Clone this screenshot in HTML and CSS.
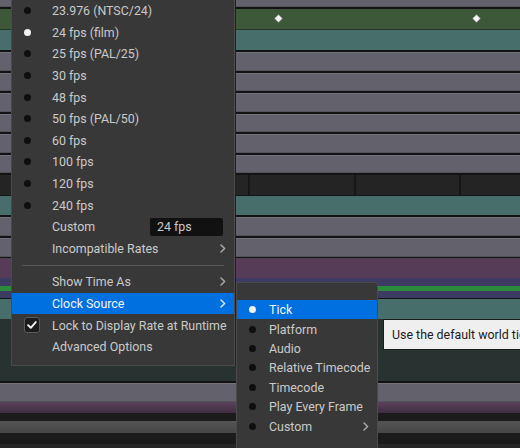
FILE: index.html
```html
<!DOCTYPE html>
<html>
<head>
<meta charset="utf-8">
<link rel="stylesheet" href="styles.css">
</head>
<body>
<div class="stage">
  <div class="timeline">
    <div class="row grey top"></div>
    <div class="row green keyrow">
      <span class="key key-a"></span>
      <span class="key key-b"></span>
    </div>
    <div class="row teal first-teal"></div>
    <div class="row grey track"></div>
    <div class="row grey track"></div>
    <div class="row grey track"></div>
    <div class="row grey track"></div>
    <div class="row grey track"></div>
    <div class="row grey track"></div>
    <div class="row dark sections">
      <div class="sec s1"></div>
      <div class="sec s2"></div>
      <div class="sec s3"></div>
      <div class="sec s4"></div>
    </div>
    <div class="row teal teal2"></div>
    <div class="row grey track2"></div>
    <div class="row grey track3"></div>
    <div class="row purple"></div>
    <div class="row bluepurple bp1"></div>
    <div class="row greenline"></div>
    <div class="row bluepurple bp2"></div>
    <div class="row teal teal3"></div>
    <div class="row darkgreen"></div>
    <div class="row grey track4"></div>
    <div class="row purplegrad"></div>
    <div class="row blackrow b1"></div>
    <div class="row greygrad"></div>
    <div class="row blackrow b2"></div>
    <div class="row bottomdark"></div>
  </div>

  <div class="menu main-menu">
    <div class="item"><span class="slot"><span class="dot"></span></span><span class="label">23.976 (NTSC/24)</span></div>
    <div class="item"><span class="slot"><span class="dot on"></span></span><span class="label">24 fps (film)</span></div>
    <div class="item"><span class="slot"><span class="dot"></span></span><span class="label">25 fps (PAL/25)</span></div>
    <div class="item"><span class="slot"><span class="dot"></span></span><span class="label">30 fps</span></div>
    <div class="item"><span class="slot"><span class="dot"></span></span><span class="label">48 fps</span></div>
    <div class="item"><span class="slot"><span class="dot"></span></span><span class="label">50 fps (PAL/50)</span></div>
    <div class="item"><span class="slot"><span class="dot"></span></span><span class="label">60 fps</span></div>
    <div class="item"><span class="slot"><span class="dot"></span></span><span class="label">100 fps</span></div>
    <div class="item"><span class="slot"><span class="dot"></span></span><span class="label">120 fps</span></div>
    <div class="item"><span class="slot"><span class="dot"></span></span><span class="label">240 fps</span></div>
    <div class="item"><span class="slot"></span><span class="label">Custom</span><span class="field">24 fps</span></div>
    <div class="item"><span class="slot"></span><span class="label">Incompatible Rates</span><svg class="chev" viewBox="0 0 6 9" width="6" height="9"><path d="M1 1 L4.6 4.5 L1 8"/></svg></div>
    <div class="sep"></div>
    <div class="item"><span class="slot"></span><span class="label">Show Time As</span><svg class="chev" viewBox="0 0 6 9" width="6" height="9"><path d="M1 1 L4.6 4.5 L1 8"/></svg></div>
    <div class="item active"><span class="slot"></span><span class="label">Clock Source</span><svg class="chev" viewBox="0 0 6 9" width="6" height="9"><path d="M1 1 L4.6 4.5 L1 8"/></svg></div>
    <div class="item"><span class="slot"><span class="check"><svg viewBox="0 0 16 16" width="14" height="14"><path d="M3.5 8.2 L6.6 11.2 L12.3 4.6"/></svg></span></span><span class="label">Lock to Display Rate at Runtime</span></div>
    <div class="item"><span class="slot"></span><span class="label">Advanced Options</span></div>
  </div>

  <div class="menu sub-menu">
    <div class="sitem active"><span class="dot on"></span><span class="label">Tick</span></div>
    <div class="sitem"><span class="dot"></span><span class="label">Platform</span></div>
    <div class="sitem"><span class="dot"></span><span class="label">Audio</span></div>
    <div class="sitem"><span class="dot"></span><span class="label">Relative Timecode</span></div>
    <div class="sitem"><span class="dot"></span><span class="label">Timecode</span></div>
    <div class="sitem"><span class="dot"></span><span class="label">Play Every Frame</span></div>
    <div class="sitem"><span class="dot"></span><span class="label">Custom</span><svg class="chev" viewBox="0 0 6 9" width="6" height="9"><path d="M1 1 L4.6 4.5 L1 8"/></svg></div>
  </div>

  <div class="tooltip">Use the default world tick</div>
</div>
</body>
</html>
```

FILE: styles.css
```css
html, body {
  margin: 0;
  padding: 0;
  background: #1b1b1b;
}
.stage {
  position: relative;
  width: 520px;
  height: 448px;
  overflow: hidden;
  font-family: Roboto, "Liberation Sans", sans-serif;
  font-size: 12.4px;
}

/* ---------- timeline background ---------- */
.timeline {
  display: flex;
  flex-direction: column;
  width: 520px;
}
.row {
  flex: none;
  position: relative;
  border-bottom: 0 solid #131313;
}
.grey {
  background: #63626c;
  box-shadow: inset 0 1px 0 #72717c, inset 0 -1px 0 #54535c;
}
.top { height: 7px; border-bottom-width: 2px; box-shadow: inset 0 -1px 0 #54535c; }
.green { background: #3c5839; height: 20px; border-bottom: 1px solid #263526; }
.teal { background: #476e6a; }
.first-teal { height: 20px; border-bottom-width: 2px; }
.track { height: 18.5px; border-bottom-width: 2px; }
.dark { background: #242424; height: 20px; border-bottom: 1px solid #151515; }
.sections { display: flex; }
.sec { height: 100%; }
.s1 { width: 248px; }
.s2 { width: 104px; border-left: 2px solid #161616; }
.s3 { width: 103px; border-left: 2px solid #161616; }
.s4 { flex: 1; border-left: 2px solid #161616; }
.teal2 { height: 19px; border-bottom-width: 2px; }
.track2 { height: 19px; border-bottom-width: 2px; }
.track3 { height: 19px; border-bottom-width: 1px; }
.purple { background: #573c58; height: 20px; }
.bluepurple { background: #3d3b62; }
.bp1 { height: 8px; }
.greenline { background: #2c8a3c; height: 5px; }
.bp2 { height: 7px; border-bottom-width: 1px; }
.teal3 { height: 20px; }
.darkgreen { background: #283230; height: 62px; border-bottom-width: 2px; }
.track4 { height: 19px; }
.purplegrad { height: 11px; background: linear-gradient(#5c425c, #3e2e40); }
.blackrow { background: #1b1b1b; }
.b1 { height: 8px; }
.greygrad { height: 12px; background: linear-gradient(#555555, #464646); }
.b2 { height: 11px; }
.bottomdark { height: 6px; background: #262626; }

.key {
  position: absolute;
  top: 7px;
  width: 5px;
  height: 5px;
  background: #f4f4f4;
  transform: rotate(45deg);
  box-shadow: 0 0 0 0.5px #9a9a9a;
}
.key-a { left: 276px; }
.key-b { left: 474px; }

/* ---------- menus ---------- */
.menu {
  position: absolute;
  box-sizing: border-box;
  background: #383838;
  border: 1px solid #4a4a4a;
  color: #cacaca;
}
.main-menu {
  left: 11px;
  top: -4px;
  width: 224px;
  padding: 3px 0 7px;
  box-shadow: 1px 0 0 #222;
}
.item {
  height: 21.6px;
  display: flex;
  align-items: center;
  padding: 0 8px 0 12px;
  white-space: nowrap;
}
.item .slot {
  width: 16px;
  height: 16px;
  margin-right: 12px;
  display: flex;
  align-items: center;
  flex: none;
}
.label { flex: 1; }
.dot {
  width: 7px;
  height: 7px;
  border-radius: 50%;
  background: #0e0e0e;
  flex: none;
}
.dot.on { background: #f2f2f2; }
.active { background: #0070e0; color: #f4f4f4; }
.active .chev path { stroke: #d8e6f6; }
.chev { flex: none; }
.chev path {
  fill: none;
  stroke: #a8a8a8;
  stroke-width: 1.5;
  stroke-linecap: round;
  stroke-linejoin: round;
}
.field {
  width: 73px;
  height: 18px;
  margin-right: 3px;
  box-sizing: border-box;
  padding-left: 7px;
  line-height: 17px;
  background: #111111;
  border-radius: 2px;
  color: #cacaca;
}
.sep {
  height: 12px;
  display: flex;
  align-items: center;
  padding: 0 10px;
}
.sep::before {
  content: "";
  flex: 1;
  height: 1px;
  background: #575757;
}
.check {
  width: 16px;
  height: 16px;
  box-sizing: border-box;
  border: 1px solid #5a5a5a;
  border-radius: 3px;
  background: #1c1c1c;
  display: flex;
  align-items: center;
  justify-content: center;
}
.check path {
  fill: none;
  stroke: #f2f2f2;
  stroke-width: 2.2;
  stroke-linecap: round;
  stroke-linejoin: round;
}

.sub-menu {
  left: 236px;
  top: 282px;
  width: 142px;
  padding: 17px 0 20px;
}
.sitem {
  height: 19.4px;
  display: flex;
  align-items: center;
  padding: 0 8px 0 12px;
  white-space: nowrap;
}
.sitem .dot { margin-right: 13px; }

.tooltip {
  position: absolute;
  left: 383px;
  top: 319px;
  height: 31px;
  box-sizing: border-box;
  padding: 0 8px;
  line-height: 29px;
  background: #efefef;
  border: 1px solid #1c1c1c;
  color: #1c1c1c;
  white-space: nowrap;
}
```
